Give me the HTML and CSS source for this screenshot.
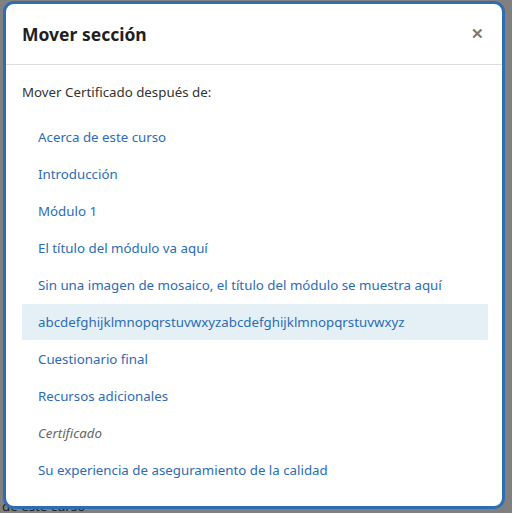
FILE: index.html
```html
<!DOCTYPE html>
<html lang="es">
<head>
    <meta charset="UTF-8">
    <title>Mover sección</title>
    <link rel="stylesheet" href="styles.css">
</head>
<body>
    <div class="page">
        <p class="page-line">de este curso</p>
    </div>
    <div class="overlay">
        <div class="modal">
            <div class="modal-header">
                <h2>Mover sección</h2>
                <button class="close-btn" aria-label="Cerrar">&#x2715;</button>
            </div>
            <div class="modal-body">
                <p class="intro">Mover Certificado después de:</p>
                <ul class="section-list">
                    <li><a href="#">Acerca de este curso</a></li>
                    <li><a href="#">Introducción</a></li>
                    <li><a href="#">Módulo 1</a></li>
                    <li><a href="#">El título del módulo va aquí</a></li>
                    <li><a href="#">Sin una imagen de mosaico, el título del módulo se muestra aquí</a></li>
                    <li class="selected"><a href="#">abcdefghijklmnopqrstuvwxyzabcdefghijklmnopqrstuvwxyz</a></li>
                    <li><a href="#">Cuestionario final</a></li>
                    <li><a href="#">Recursos adicionales</a></li>
                    <li class="current">Certificado</li>
                    <li><a href="#">Su experiencia de aseguramiento de la calidad</a></li>
                </ul>
            </div>
        </div>
    </div>
</body>
</html>
```

FILE: styles.css
```css
/* Stile generale */
body {
    font-family: "Noto Sans", Arial, sans-serif;
    background: #808080;
    margin: 0;
    padding: 0;
    height: 513px;
    overflow: hidden;
}

.page {
    padding: 499px 0 0 2px;
}

.page-line {
    margin: 0;
    font-size: 13.3px;
    line-height: 14px;
    color: #222;
}

.overlay {
    position: absolute;
    left: 3px;
    top: 1px;
}

.modal {
    width: 496px;
    height: 502px;
    background: white;
    border: 3px solid #2f6db3;
    border-radius: 11px;
    overflow: hidden;
}

.modal-header {
    height: 60px;
    padding: 0 16px;
    border-bottom: 1px solid #dddddd;
    display: flex;
    align-items: center;
    justify-content: space-between;
}

.modal-header h2 {
    margin: 0;
    font-size: 17.5px;
    font-weight: bold;
    color: #1f1f1f;
}

.close-btn {
    background: none;
    border: none;
    padding: 0;
    margin-right: 2px;
    color: #777;
    font-size: 15px;
    font-weight: bold;
    cursor: pointer;
}

.modal-body {
    padding: 16px 14px 0 16px;
}

.intro {
    margin: 0 0 15px 0;
    font-size: 13.3px;
    line-height: 23px;
    color: #333;
}

.section-list {
    list-style: none;
    margin: 0;
    padding: 0;
}

.section-list li {
    height: 37px;
    line-height: 37px;
    padding-left: 16px;
    font-size: 13.3px;
}

.section-list a {
    color: #2b6cb7;
    text-decoration: none;
}

.section-list li.selected {
    background: #e5f0f6;
    height: 36px;
    line-height: 36px;
    margin-bottom: 1px;
}

.section-list li.current {
    color: #666;
    font-style: italic;
}
```
